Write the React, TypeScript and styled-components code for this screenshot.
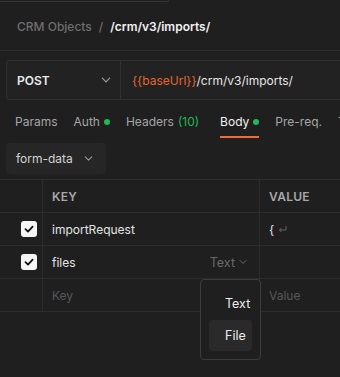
import { createGlobalStyle } from "styled-components";
import styled from "styled-components";

const Global = createGlobalStyle`
  html, body {
    margin: 0;
    padding: 0;
    background: #1f1f1f;
    font-family: Inter, "Noto Sans", sans-serif;
    -webkit-font-smoothing: antialiased;
  }
`;

const Page = styled.div`
  width: 340px;
  height: 377px;
  overflow: hidden;
  background: #1f1f1f;
  color: #e6e6e6;
  position: relative;
`;

const TopStub = styled.div`
  width: 168px;
  height: 1px;
  border-bottom: 1px solid #363636;
  border-right: 1px solid #363636;
  border-bottom-right-radius: 3px;
`;

const Breadcrumb = styled.div`
  height: 48px;
  display: flex;
  align-items: center;
  gap: 7px;
  padding-left: 17px;
  font-size: 12px;
  border-bottom: 1px solid #2c2c2c;
`;

const Crumb = styled.span<{ $active?: boolean }>`
  color: ${(p) => (p.$active ? "#f2f2f2" : "#6e6e6e")};
  font-weight: ${(p) => (p.$active ? 600 : 500)};
`;

const UrlBar = styled.div`
  margin: 9px 0 0 6px;
  height: 38px;
  display: flex;
  border: 1px solid #303030;
  border-right: none;
  border-radius: 4px 0 0 4px;
  background: #222222;
`;

const Method = styled.div`
  width: 114px;
  box-sizing: border-box;
  display: flex;
  align-items: center;
  justify-content: space-between;
  padding: 0 8px 0 10px;
  border-right: 1px solid #303030;
  font-size: 12px;
  font-weight: 600;
  color: #eaeaea;
`;

const Url = styled.div`
  display: flex;
  align-items: center;
  padding-left: 11px;
  font-size: 12px;
  color: #e6e6e6;
  white-space: nowrap;
`;

const Var = styled.span`
  color: #e8642f;
`;

const Tabs = styled.div`
  display: flex;
  height: 34px;
  padding-left: 15px;
  gap: 16px;
  margin-top: 4px;
  margin-bottom: 2px;
  white-space: nowrap;
`;

const Tab = styled.div<{ $active?: boolean; $wide?: boolean }>`
  display: flex;
  align-items: center;
  gap: 4px;
  font-size: 12px;
  color: ${(p) => (p.$active ? "#f2f2f2" : "#a6a6a6")};
  box-sizing: border-box;
  border-bottom: 2px solid ${(p) => (p.$active ? "#f26b3a" : "transparent")};
  padding-top: 3px;
  margin-right: ${(p) => (p.$wide ? "5px" : "0")};
`;

const Dot = styled.span`
  width: 6px;
  height: 6px;
  border-radius: 50%;
  background: #1fb955;
`;

const Count = styled.span`
  color: #1fb955;
`;

const FormRow = styled.div`
  padding: 3px 0 0 6px;
  height: 36px;
  box-sizing: border-box;
`;

const Select = styled.div`
  width: 100px;
  height: 31px;
  box-sizing: border-box;
  display: flex;
  align-items: center;
  justify-content: space-between;
  padding: 0 12px 0 10px;
  background: #262626;
  border-radius: 4px;
  font-size: 12px;
  color: #d2d2d2;
`;

const Table = styled.div`
  margin-top: 3px;
  border-top: 1px solid #2c2c2c;
  position: relative;
`;

const Row = styled.div`
  display: grid;
  grid-template-columns: 42px 217px 1fr;
  height: 33px;
  border-bottom: 1px solid #2c2c2c;
  box-sizing: border-box;
`;

const Cell = styled.div<{ $tone?: "head" | "text" | "placeholder" }>`
  display: flex;
  align-items: center;
  padding-left: 9px;
  border-left: 1px solid #2c2c2c;
  font-size: 12px;
  white-space: nowrap;
  overflow: hidden;
  color: ${(p) =>
    p.$tone === "head" ? "#a8a8a8" : p.$tone === "placeholder" ? "#575757" : "#e4e4e4"};
  font-weight: ${(p) => (p.$tone === "head" ? 600 : 400)};
  letter-spacing: ${(p) => (p.$tone === "head" ? "0.3px" : "0")};
`;

const KeyCell = styled(Cell)`
  justify-content: space-between;
  padding-right: 11px;
`;

const CheckCell = styled.div`
  display: flex;
  align-items: center;
  justify-content: flex-end;
  padding-right: 5px;
`;

const Box = styled.span`
  width: 16px;
  height: 16px;
  border-radius: 3px;
  background: #f5f5f5;
  display: flex;
  align-items: center;
  justify-content: center;
`;

const TypeLabel = styled.span`
  display: flex;
  align-items: center;
  gap: 3px;
  color: #6a6a6a;
  font-size: 12.5px;
`;

const Menu = styled.div`
  position: absolute;
  left: 200px;
  top: 99px;
  width: 61px;
  height: 81px;
  box-sizing: border-box;
  background: #1f1f1f;
  border: 1px solid #3c3c3c;
  border-radius: 4px;
  padding: 8px;
  display: flex;
  flex-direction: column;
`;

const MenuItem = styled.div<{ $hover?: boolean }>`
  height: 32px;
  display: flex;
  align-items: center;
  padding-left: 16px;
  border-radius: 4px;
  font-size: 12.5px;
  color: #ededed;
  background: ${(p) => (p.$hover ? "#2a2a2a" : "transparent")};
`;

const Chevron = ({ size = 10, color = "#9a9a9a" }: { size?: number; color?: string }) => (
  <svg width={size} height={size} viewBox="0 0 10 10" fill="none">
    <path d="M2 3.5 L5 6.5 L8 3.5" stroke={color} strokeWidth="1" strokeLinecap="round" strokeLinejoin="round" />
  </svg>
);

const Tick = () => (
  <svg width="12" height="12" viewBox="0 0 12 12" fill="none">
    <path d="M2.5 6.2 L5 8.6 L9.6 3.6" stroke="#111" strokeWidth="1.8" strokeLinecap="round" strokeLinejoin="round" />
  </svg>
);

const ReturnGlyph = () => (
  <svg width="9" height="8" viewBox="0 0 9 8" fill="none">
    <path d="M8 1 V5 H1.5 M3.5 3 L1.5 5 L3.5 7" stroke="#6a6a6a" strokeWidth="0.9" />
  </svg>
);

export default function App() {
  return (
    <Page>
      <Global />
      <TopStub />
      <Breadcrumb>
        <Crumb>CRM Objects</Crumb>
        <Crumb>/</Crumb>
        <Crumb $active>/crm/v3/imports/</Crumb>
      </Breadcrumb>
      <UrlBar>
        <Method>
          POST
          <Chevron size={12} />
        </Method>
        <Url>
          <Var>{"{{baseUrl}}"}</Var>/crm/v3/imports/
        </Url>
      </UrlBar>
      <Tabs>
        <Tab>Params</Tab>
        <Tab>
          Auth <Dot />
        </Tab>
        <Tab $wide>
          Headers <Count>(10)</Count>
        </Tab>
        <Tab $active>
          Body <Dot />
        </Tab>
        <Tab>Pre-req.</Tab>
        <Tab>Tests</Tab>
      </Tabs>
      <FormRow>
        <Select>
          form-data
          <Chevron size={11} />
        </Select>
      </FormRow>
      <Table>
        <Row>
          <CheckCell />
          <Cell $tone="head">KEY</Cell>
          <Cell $tone="head">VALUE</Cell>
        </Row>
        <Row>
          <CheckCell>
            <Box>
              <Tick />
            </Box>
          </CheckCell>
          <Cell>importRequest</Cell>
          <Cell>
            {"{"}&nbsp;
            <ReturnGlyph />
          </Cell>
        </Row>
        <Row>
          <CheckCell>
            <Box>
              <Tick />
            </Box>
          </CheckCell>
          <KeyCell>
            files
            <TypeLabel>
              Text
              <Chevron size={10} color="#6a6a6a" />
            </TypeLabel>
          </KeyCell>
          <Cell />
        </Row>
        <Row>
          <CheckCell />
          <Cell $tone="placeholder">Key</Cell>
          <Cell $tone="placeholder">Value</Cell>
        </Row>
        <Menu>
          <MenuItem>Text</MenuItem>
          <MenuItem $hover>File</MenuItem>
        </Menu>
      </Table>
    </Page>
  );
}
